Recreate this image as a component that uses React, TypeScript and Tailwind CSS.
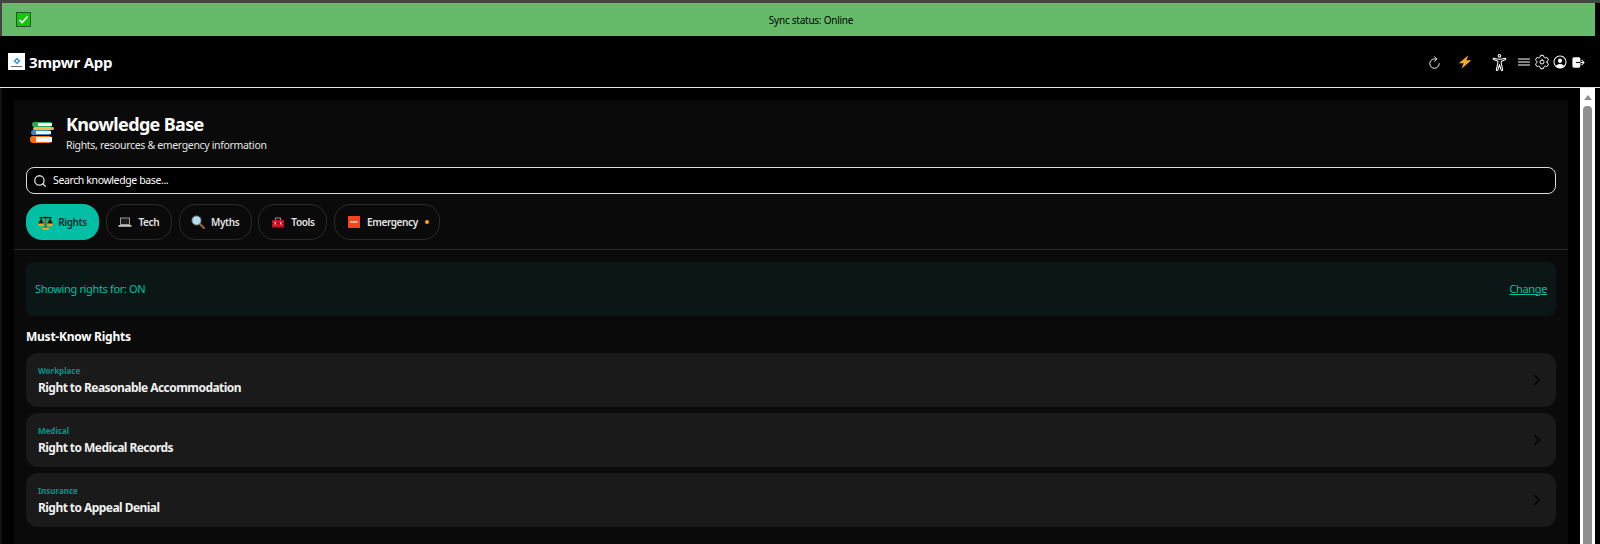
import React from 'react';
import { ChevronRight, Search } from 'lucide-react';
import { IoRefresh, IoMenuOutline, IoSettingsOutline, IoPersonCircleOutline, IoLogOut, IoAccessibilityOutline } from 'react-icons/io5';

const fontStack = "font-['Noto_Sans','Open_Sans',sans-serif]";

const BooksIcon = () => (
  <svg width="24" height="24" viewBox="0 0 24 24" className="shrink-0">
    <rect x="2" y="1" width="20" height="5" rx="2.500" fill="#2fa84f" />
    <rect x="8" y="2" width="14" height="3" fill="#f4f4f4" />
    <rect x="3" y="6" width="21" height="3" rx="1.500" fill="#f5b642" />
    <rect x="1" y="9" width="20" height="5" rx="2.500" fill="#3b88c3" />
    <rect x="6" y="10" width="15" height="3" fill="#f4f4f4" />
    <rect x="0" y="15" width="22" height="7" rx="3" fill="#f4700e" />
    <rect x="6" y="16" width="16" height="5" fill="#f4f4f4" />
  </svg>
);

const ScaleIcon = () => (
  <svg width="15" height="15" viewBox="0 0 15 15" className="shrink-0">
    <rect x="6.700" y="1" width="1.600" height="12" fill="#8a5a12" />
    <rect x="1.500" y="2" width="12" height="1.300" fill="#1a1408" />
    <path d="M0 9h6L3 3zM9 9h6l-3-6z" fill="#1a1408" />
    <path d="M0 8.500h6a3 3 0 0 1-6 0zM9 8.500h6a3 3 0 0 1-6 0z" fill="#f2a71b" />
    <rect x="4" y="13" width="7" height="1.800" fill="#f2a71b" />
  </svg>
);

const LaptopIcon = () => (
  <svg width="14" height="14" viewBox="0 0 14 14" className="shrink-0">
    <rect x="2" y="2.500" width="10" height="7.500" fill="#9a9a9a" />
    <rect x="3" y="3.500" width="8" height="5.500" fill="#1c1c1c" />
    <rect x="0.500" y="10" width="13" height="1.800" fill="#c4c4c4" />
  </svg>
);

const MagnifierIcon = () => (
  <svg width="14" height="14" viewBox="0 0 14 14" className="shrink-0">
    <path d="M8 8l5 5" stroke="#8a6a3a" strokeWidth="2.200" strokeLinecap="round" />
    <circle cx="5.500" cy="5.500" r="4.500" fill="#b5dcf5" stroke="#7a8a96" strokeWidth="1" />
  </svg>
);

const ToolboxIcon = () => (
  <svg width="14" height="14" viewBox="0 0 14 14" className="shrink-0">
    <path d="M4.500 5V3h5v2" fill="none" stroke="#8a8a8a" strokeWidth="1.200" />
    <rect x="1" y="5" width="12" height="7.500" rx="1" fill="#d3122a" />
    <rect x="1" y="8" width="12" height="1" fill="#8f0c1c" />
    <rect x="3.500" y="7" width="1.500" height="2.500" fill="#e8b9bf" />
    <rect x="9" y="7" width="1.500" height="2.500" fill="#e8b9bf" />
  </svg>
);

const SosIcon = () => (
  <svg width="12" height="12" viewBox="0 0 12 12" className="shrink-0">
    <rect width="12" height="12" fill="#f2441d" />
    <rect x="2.500" y="5" width="2" height="2" fill="#ffc9ba" />
    <rect x="5" y="5" width="2" height="2" fill="#ffc9ba" />
    <rect x="7.500" y="5" width="2" height="2" fill="#ffc9ba" />
  </svg>
);

const BoltIcon = () => (
  <svg width="16" height="16" viewBox="0 0 14 14">
    <path d="M10 1L1.500 8h4.300L4 13l8.500-7.500H8.200z" fill="#f9a825" />
  </svg>
);

const tabs = [
  { label: 'Tech', icon: <LaptopIcon />, width: 'w-[66px]' },
  { label: 'Myths', icon: <MagnifierIcon />, width: 'w-[73px]' },
  { label: 'Tools', icon: <ToolboxIcon />, width: 'w-[69px]' },
];

const rights = [
  { category: 'Workplace', title: 'Right to Reasonable Accommodation' },
  { category: 'Medical', title: 'Right to Medical Records' },
  { category: 'Insurance', title: 'Right to Appeal Denial' },
];

export default function App() {
  return (
    <div className={`h-[544px] w-[1600px] overflow-hidden flex flex-col bg-black ${fontStack}`}>
      <div className="border-t-[3px] border-[#444444] pr-[5px]">
        <div className="h-[33px] bg-[#66bb6a] border-l-2 border-[#444444] flex items-center pl-[14px] pr-4">
          <span className="w-[15px] h-[15px] bg-[#16c60c] border border-[#1b5e20] flex items-center justify-center">
            <svg width="11" height="11" viewBox="0 0 11 11" fill="none" stroke="#fff" strokeWidth="1.600">
              <path d="M1.500 6l2.500 2.500L9.500 2.500" />
            </svg>
          </span>
          <span className="flex-1 pl-3 pt-px text-center text-[10px] tracking-[-0.25px] text-black">Sync status: Online</span>
        </div>
      </div>

      <header className="h-[52px] border-b border-[#e5e5e5] flex items-center pl-2 pr-[14px] text-white shrink-0">
        <div className="w-[17px] h-[17px] bg-white flex flex-col items-center justify-center gap-px">
          <svg width="8" height="8" viewBox="0 0 8 8">
            <path d="M4 0.500L7.500 4 4 7.500 0.500 4z" fill="#3f9ee0" />
            <circle cx="4" cy="4" r="1" fill="#fff" />
          </svg>
          <div className="w-[11px] h-px bg-[#666666]" />
        </div>
        <span className="ml-1 pt-px text-[15px] font-bold tracking-[-0.2px]">3mpwr App</span>
        <div className="ml-auto pt-px flex items-center">
          <IoRefresh size={15} />
          <span className="ml-[15px]"><BoltIcon /></span>
          <IoAccessibilityOutline size={17} className="ml-[18px]" />
          <IoMenuOutline size={16} className="ml-[8px]" />
          <IoSettingsOutline size={16} className="ml-[2px]" />
          <IoPersonCircleOutline size={16} className="ml-[2px]" />
          <IoLogOut size={15} className="ml-[3px]" />
        </div>
      </header>

      <div className="flex-1 min-h-0 flex">
        <main className="w-[1580px] border-l-2 border-[#111111] pl-3 pr-[12px] pt-3 overflow-hidden">
          <div className="bg-[#0a0a0a] h-full">
            <div className="px-3 pt-[13px] pb-[9px] border-b border-[#2a2a2a]">
              <div className="flex items-center pl-1">
                <BooksIcon />
                <div className="ml-3">
                  <h1 className="-mt-px text-lg font-bold tracking-[-0.65px] text-white leading-[24px]">Knowledge Base</h1>
                  <p className="mt-px text-[10.500px] tracking-[-0.33px] text-[#e5e5e5] leading-4">Rights, resources &amp; emergency information</p>
                </div>
              </div>
              <div className="mt-[14px] h-[27px] bg-black border border-[#dddddd] rounded-lg flex items-center px-[6px] text-white">
                <Search size={14} strokeWidth={2.200} className="text-[#dddddd]" />
                <span className="ml-[6px] text-[10.500px] tracking-[-0.38px]">Search knowledge base...</span>
              </div>
              <div className="mt-[10px] flex gap-[6.800px]">
                <button className="w-[73px] h-9 rounded-2xl bg-[#00bfa5] flex items-center justify-center gap-[5px] text-[10px] font-semibold tracking-[-0.4px] text-[#0a2a26]">
                  <ScaleIcon />
                  Rights
                </button>
                {tabs.map((tab) => (
                  <button key={tab.label} className={`${tab.width} h-9 rounded-2xl border border-[#2a2a2a] flex items-center justify-center gap-[6px] text-[10px] font-semibold tracking-[-0.4px] text-[#e5e5e5]`}>
                    {tab.icon}
                    {tab.label}
                  </button>
                ))}
                <button className="w-[105.500px] h-9 pl-[3px] rounded-2xl border border-[#2a2a2a] flex items-center justify-center gap-[7px] text-[10px] font-semibold tracking-[-0.4px] text-[#e5e5e5]">
                  <SosIcon />
                  Emergency
                  <span className="w-1 h-1 rounded-full bg-[#ffa000]" />
                </button>
              </div>
            </div>

            <div className="px-3 pt-3">
              <div className="h-[54px] rounded-lg bg-[#0a1716] flex items-center justify-between px-[9px] text-[11px] tracking-[-0.35px] text-[#00bfa5]">
                <span>Showing rights for: ON</span>
                <a className="underline">Change</a>
              </div>
              <h2 className="mt-[13px] text-xs font-bold tracking-[-0.25px] text-white leading-4">Must-Know Rights</h2>
              <div className="mt-[8px] flex flex-col gap-[6px]">
                {rights.map((r) => (
                  <div key={r.title} className="h-[54px] rounded-xl bg-[#1a1a1a] flex items-center justify-between pl-3 pr-[10px]">
                    <div>
                      <div className="text-[8px] font-bold text-[#009688] leading-[11px]">{r.category}</div>
                      <div className="mt-[4px] text-xs font-bold tracking-[-0.55px] text-[#f0f0f0] leading-4">{r.title}</div>
                    </div>
                    <ChevronRight size={18} strokeWidth={1.600} className="text-black" />
                  </div>
                ))}
              </div>
            </div>
          </div>
        </main>
        <div className="w-[15px] bg-white flex flex-col items-center">
          <div className="mt-[7px] w-0 h-0 border-x-[4.500px] border-x-transparent border-b-[5px] border-b-[#8f8f8f]" />
          <div className="mt-[6px] w-[9px] flex-1 bg-[#8f8f8f] rounded-t-[4px]" />
        </div>
      </div>
    </div>
  );
}
